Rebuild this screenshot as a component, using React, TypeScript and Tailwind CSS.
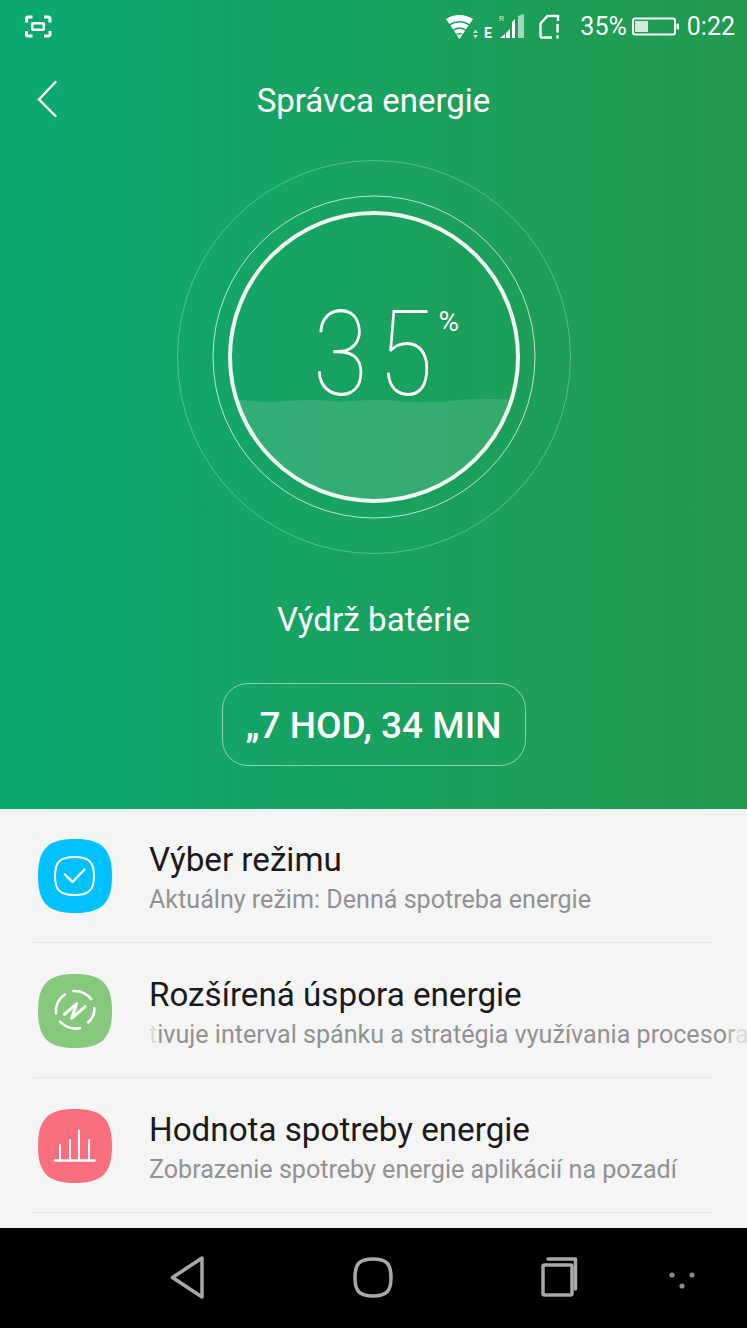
const rows = [
  { title: "Výber režimu", sub: "Aktuálny režim: Denná spotreba energie", icon: "mode" },
  { title: "Rozšírená úspora energie", sub: "ivuje interval spánku a stratégia využívania proceso", fadeStart: "t", fadeEnd: true, icon: "saver" },
  { title: "Hodnota spotreby energie", sub: "Zobrazenie spotreby energie aplikácií na pozadí", icon: "usage" },
];

function StatusBar() {
  return (
    <div className="flex h-[53px] items-center justify-between pl-[25px] pr-[12px] text-white">
      <svg width="28" height="23" viewBox="0 0 28 23" fill="none" stroke="white" strokeWidth="3">
        <path d="M1.5 7.5V3.5A1.5 1.5 0 0 1 3 2H7.5M19 2H23.5A1.5 1.5 0 0 1 25 3.5V7.5M25 16V19.5A1.5 1.5 0 0 1 23.5 21H19M7.5 21H3A1.5 1.5 0 0 1 1.5 19.5V16" />
        <rect x="7.2" y="8.3" width="11.6" height="6.4" rx="1" strokeWidth="2.6" />
      </svg>
      <div className="flex items-center">
        <svg width="79" height="28" viewBox="0 0 79 28" fill="none" className="mr-[12px]">
          <g stroke="white">
            <path d="M1.7 8.6A21 21 0 0 1 25.3 8.6" strokeWidth="6" />
            <path d="M5.7 14.4A14 14 0 0 1 21.3 14.4" strokeWidth="5" />
            <path d="M9 19.4A8 8 0 0 1 18 19.4" strokeWidth="4" />
          </g>
          <g fill="white">
            <path d="M10.5 21.5H16.5L13.5 26Z" />
            <path d="M27 20h5l-2.5-3.5ZM27 22h5l-2.5 3.5Z" opacity=".75" />
            <text x="38" y="25" fontSize="14" fontWeight="700" fontFamily="Roboto, sans-serif">E</text>
            <text x="53" y="8" fontSize="8" fontFamily="Roboto, sans-serif" opacity=".8">R</text>
            <path d="M54 25l5-4v4ZM60 25V20l4-4v9ZM66 25V9l3-3v19Z" />
            <path d="M72 25V3l6-2v24Z" opacity=".6" />
          </g>
        </svg>
        <svg width="24" height="28" viewBox="0 0 24 28" fill="none" stroke="white" strokeWidth="2.4" className="mr-[19px]">
          <path d="M15 24.5H5a1.5 1.5 0 0 1-1.5-1.5V10.5L10.5 3H21V8" />
          <path d="M20.5 11V19.5M20.5 22V25.5" />
        </svg>
        <span className="text-[25px] leading-none">35%</span>
        <svg width="50" height="22" viewBox="0 0 50 22" fill="none" className="ml-[4px] mr-[6px]">
          <rect x="2" y="2.5" width="42" height="16" rx="2" stroke="white" strokeWidth="2" />
          <rect x="4" y="5" width="13" height="11" fill="white" opacity=".8" />
          <rect x="45.5" y="7.5" width="2.5" height="6" rx="1" fill="white" />
        </svg>
        <span className="text-[25px] leading-none">0:22</span>
      </div>
    </div>
  );
}

function Gauge() {
  return (
    <div className="relative mx-auto mt-[28px] h-[396px] w-[396px]">
      <svg width="396" height="396" viewBox="0 0 396 396" fill="none">
        <defs>
          <clipPath id="tank">
            <circle cx="198" cy="198" r="143" />
          </clipPath>
        </defs>
        <circle cx="198" cy="198" r="196.5" stroke="white" strokeOpacity=".28" strokeWidth="1" />
        <circle cx="198" cy="198" r="161" stroke="white" strokeOpacity=".7" strokeWidth="1" />
        <path
          clipPath="url(#tank)"
          d="M50 241C70 240 80 244 100 243C120 241 135 240 155 242C175 244 190 240 210 241C230 244 245 243 265 243C285 240 300 239 350 241V350H50Z"
          fill="white"
          fillOpacity=".12"
        />
        <circle cx="198" cy="198" r="144" stroke="#f0f7f2" strokeWidth="4" />
      </svg>
      <span className="absolute left-[137px] top-[137px] origin-left scale-x-[0.85] text-[118px] font-thin leading-[118px] text-white">
        <span className="tracking-[12px]">3</span>5
      </span>
      <span className="absolute left-[263px] top-[149px] text-[28px] leading-[28px] text-white">%</span>
    </div>
  );
}

function RowIcon({ kind }: { kind: string }) {
  const bg = kind === "mode" ? "#00c1ff" : kind === "saver" ? "#86c97d" : "#f96f80";
  return (
    <svg width="74" height="74" viewBox="0 0 74 74" fill="none" className="shrink-0">
      <path d="M37 0C64 0 74 10 74 37S64 74 37 74 0 64 0 37 10 0 37 0Z" fill={bg} />
      {kind === "mode" && (
        <g stroke="white" strokeLinecap="round" strokeLinejoin="round">
          <path d="M36.5 18C51 18 56 23 56 37S51 56 36.5 56 17 51 17 37 22 18 36.5 18Z" strokeWidth="2" />
          <path d="M27 35.5L34.5 43L46.5 30.5" strokeWidth="2.4" />
        </g>
      )}
      {kind === "saver" && (
        <g stroke="white" strokeLinecap="round" strokeLinejoin="round">
          <g strokeWidth="2.6">
            <path d="M18 39.5C17 32 20.5 24.5 27 20.5" />
            <path d="M35.5 17C42 16.5 48.5 19.5 53 25" />
            <path d="M56.3 34.3C56.8 39.5 54.5 44.5 50.3 48.3" />
            <path d="M22 47.7C27 52.8 34.5 55.5 42 54.3" />
          </g>
          <path d="M26.5 40.3L38.7 29.5L33.7 44.3L47 32.7" strokeWidth="3" />
        </g>
      )}
      {kind === "usage" && (
        <g stroke="white" strokeLinecap="round">
          <path d="M17 51.5H56.5" strokeWidth="2.4" />
          <path d="M22 51V36M32 51V31M41 51V21.5M51 51V31" strokeWidth="2" />
        </g>
      )}
    </svg>
  );
}

function Row({ title, sub, fadeStart, fadeEnd, icon }: { title: string; sub: string; fadeStart?: string; fadeEnd?: boolean; icon: string }) {
  return (
    <div className="ml-[34px] mr-[33px] flex h-[135px] items-center border-b border-[#e6e6e6] pl-[4px] pt-[2px]">
      <RowIcon kind={icon} />
      <div className="ml-[37px] min-w-0 pt-[2px]">
        <div className="whitespace-nowrap text-[33.2px] leading-[40px] text-[#1a1a1a]">{title}</div>
        <div className="mt-[5px] whitespace-nowrap text-[25.1px] leading-[30px] text-[#929292]">
          {fadeStart && <span className="text-[#dcdcdc]">{fadeStart}</span>}
          {sub}
          {fadeEnd && (
            <>
              <span className="text-[#b4b4b4]">r</span>
              <span className="text-[#dcdcdc]">a</span>
            </>
          )}
        </div>
      </div>
    </div>
  );
}

export default function App() {
  return (
    <div className="flex h-[1328px] w-[747px] flex-col overflow-hidden bg-[#f5f5f5] font-['Roboto',sans-serif]">
      <div className="h-[809px] shrink-0 bg-gradient-to-r from-[#0aa970] to-[#219a4e] text-white">
        <StatusBar />
        <div className="relative flex h-[78px] items-center justify-center">
          <svg width="22" height="38" viewBox="0 0 22 38" fill="none" stroke="white" strokeWidth="2.4" strokeLinecap="round" className="absolute left-[37px] top-[27px]">
            <path d="M18.5 2L2 19.5L18.5 36" />
          </svg>
          <span className="mt-[16px] text-[33px] leading-none">Správca energie</span>
        </div>
        <Gauge />
        <div className="mt-[45px] text-center text-[33.2px] leading-[40px]">Výdrž batérie</div>
        <div className="mx-auto mt-[43px] flex h-[83px] w-[304px] items-center justify-center rounded-[26px] border-[1.5px] border-white/50 pt-[2px] text-[37px] font-medium leading-none">
          „7 HOD, 34 MIN
        </div>
      </div>
      <div className="-mt-px h-[420px] shrink-0 overflow-hidden">
        {rows.map((r) => (
          <Row key={r.title} {...r} />
        ))}
      </div>
      <div className="flex h-[100px] shrink-0 items-center bg-black">
        <svg width="747" height="100" viewBox="0 0 747 100" fill="none" stroke="#a8a8a8" strokeWidth="3.5" strokeLinejoin="round" strokeLinecap="round">
          <path d="M172.5 49.5L202 30V69Z" />
          <path d="M373 31C387 31 391 36 391 49.5S387 68 373 68 355 63 355 49.5 359 31 373 31Z" />
          <rect x="543" y="37" width="29" height="30" rx="1.5" />
          <path d="M548 31H575.5V61" />
          <g fill="#8a8a8a" stroke="none">
            <circle cx="672" cy="47" r="2.6" />
            <circle cx="692" cy="47" r="2.6" />
            <circle cx="682" cy="58" r="2.6" />
          </g>
        </svg>
      </div>
    </div>
  );
}
